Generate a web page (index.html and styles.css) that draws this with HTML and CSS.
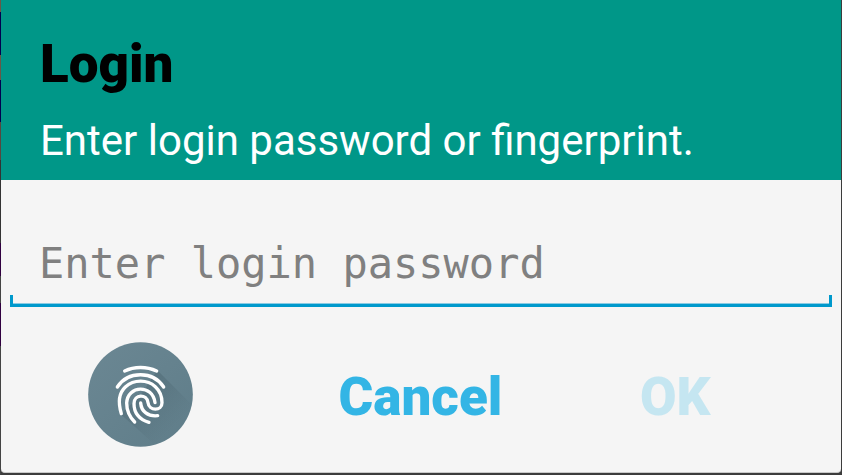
FILE: index.html
```html
<!DOCTYPE html>
<html lang="en">
<head>
<meta charset="utf-8">
<meta name="viewport" content="width=device-width, initial-scale=1">
<title>Login</title>
<link rel="stylesheet" href="styles.css">
</head>
<body>
<form class="dialog">
  <header class="dialog-header">
    <h1 class="dialog-title">Login</h1>
    <p class="dialog-message">Enter login password or fingerprint.</p>
  </header>
  <div class="field">
    <input class="field-input" type="password" placeholder="Enter login password" aria-label="Enter login password">
  </div>
  <div class="actions">
    <button class="action fingerprint" type="button" aria-label="Use fingerprint">
      <svg class="fingerprint-icon" viewBox="24 21 315 315" aria-hidden="true">
        <defs>
          <linearGradient id="disc" x1="0" y1="0" x2="1" y2="1">
            <stop offset="0" stop-color="#6b8793"/>
            <stop offset="1" stop-color="#5f7d89"/>
          </linearGradient>
          <linearGradient id="shade" gradientUnits="userSpaceOnUse" x1="180" y1="180" x2="280" y2="280">
            <stop offset="0" stop-color="#4e6873" stop-opacity=".5"/>
            <stop offset="1" stop-color="#4e6873" stop-opacity="0"/>
          </linearGradient>
          <clipPath id="round"><circle cx="181.500" cy="178.500" r="157"/></clipPath>
        </defs>
        <circle cx="181.500" cy="178.500" r="157" fill="url(#disc)"/>
        <path clip-path="url(#round)" fill="url(#shade)" d="M232 106L360 234V360H260L122 238L182 180Z"/>
        <g fill="none" stroke="#fff" stroke-width="10" stroke-linecap="round">
          <path d="M134 108C163 94 200 94 230 108"/>
          <path d="M112 156C144 107 219 107 251 156"/>
          <path d="M124 236C112 197 118 173 136 156C163 132 202 134 226 155C239 167 246 184 246 203C246 229 207 229 204 203C201 176 162 177 162 206C162 236 181 254 207 262"/>
          <path d="M164 261C145 242 140 223 140 204C143 150 218 147 225 203"/>
          <path d="M182 204C184 230 204 245 233 242"/>
        </g>
      </svg>
    </button>
    <button class="action action-text" type="button">Cancel</button>
    <button class="action action-text" type="submit" disabled>OK</button>
  </div>
</form>
</body>
</html>
```
FILE: styles.css
```css
* {
  box-sizing: border-box;
}

body {
  margin: 0;
  min-height: 100vh;
  display: flex;
  padding: 0 1px 2px;
  font-family: Roboto, "Liberation Sans", sans-serif;
  background:
    linear-gradient(#685848 12px, #000050 12px 55px, #685848 55px 80px,
      #000050 80px 122px, #584840 122px 160px, #333 160px 243px,
      #300040 243px 276px, #444 276px 303px, #300040 303px 346px, #444 346px)
    left / 1px 100% no-repeat,
    #3c3c3c;
}

.dialog {
  flex: 1;
  display: flex;
  flex-direction: column;
  background: #f5f5f5;
  border-bottom: 1px solid #c8c8c8;
  border-radius: 0 0 4px 4px;
}

.dialog-header {
  padding: 32px 39px 11px;
  color: #fff;
  background: #009788;
}

.dialog-title {
  margin: 0 0 17px;
  font-size: 53px;
  line-height: 64px;
  font-weight: 900;
  color: #000;
}

.dialog-message {
  margin: 0;
  font-size: 42px;
  line-height: 56px;
}

.field {
  padding: 48px 9px 0;
}

.field-input {
  display: block;
  width: 100%;
  height: 79px;
  padding: 0 29px 8px;
  border: 0;
  outline: 0;
  font-family: "DejaVu Sans Mono", monospace;
  font-size: 42px;
  color: #222;
  background:
    linear-gradient(#0099cc, #0099cc) left bottom / 3px 12px no-repeat,
    linear-gradient(#0099cc, #0099cc) right bottom / 3px 12px no-repeat,
    linear-gradient(#8acbe3 1px, #0099cc 1px) left bottom / 100% 4px no-repeat;
}

.field-input::placeholder {
  color: #808080;
  opacity: 1;
}

.actions {
  flex: 1;
  display: grid;
  grid-template-columns: 28fr 28fr 23fr;
  align-items: center;
  padding: 10px 51px 0 0;
}

.action {
  padding: 0;
  border: 0;
  font-family: inherit;
  font-size: 53px;
  line-height: 64px;
  font-weight: 900;
  color: #33b5e5;
  background: none;
}

.action-text {
  padding-top: 4px;
}

.action:disabled {
  color: #c5e6f1;
}

.fingerprint-icon {
  display: block;
  width: 105px;
  height: 105px;
  margin: 0 auto;
}
```
